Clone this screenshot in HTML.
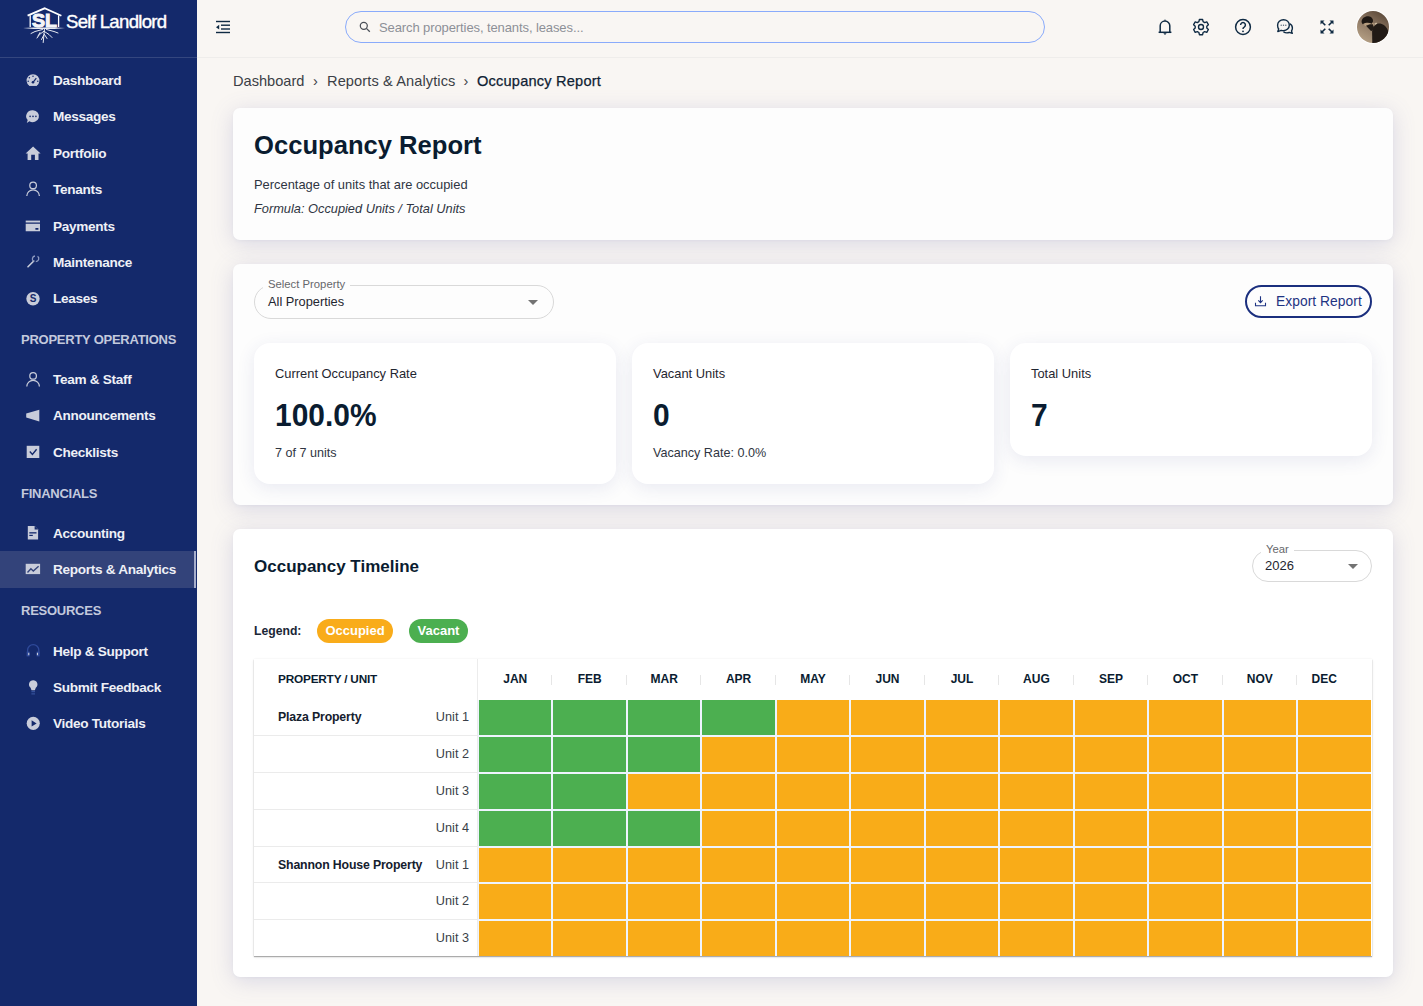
<!DOCTYPE html>
<html><head><meta charset="utf-8">
<style>
*{box-sizing:border-box;margin:0;padding:0}
html,body{width:1423px;height:1006px;overflow:hidden}
body{font-family:"Liberation Sans",sans-serif;background:#f9f6f3;color:#1f2937;position:relative}
.abs{position:absolute}
.sb{position:absolute;left:0;top:0;width:197px;height:1006px;background:#14296b}
.sb .div{position:absolute;left:0;top:57px;width:197px;height:1px;background:#34467f}
.sb .logo{position:absolute;left:20px;top:4px}
.sb .ltxt{position:absolute;left:66px;top:11.5px;color:#fff;font-size:18.6px;line-height:20px;letter-spacing:-0.7px;white-space:nowrap;-webkit-text-stroke:0.4px #fff}
.sb .ic{position:absolute;left:26px;width:14px;height:14px}
.sb .ic svg{display:block}
.sb .nt{position:absolute;left:53px;color:#eef0f6;font-size:13.6px;line-height:16px;font-weight:bold;white-space:nowrap;letter-spacing:-0.3px}
.sb .sec{position:absolute;left:21px;color:#c3c9dd;font-size:13px;line-height:15px;font-weight:bold;white-space:nowrap;letter-spacing:-0.25px}
.sb .act{position:absolute;left:0;width:196px;height:37px;background:#33437a}
.sb .act:after{content:"";position:absolute;left:194px;top:0;width:2px;height:37px;background:#a7aecb}
.top{position:absolute;left:197px;top:0;width:1226px;height:58px;background:#f9f6f3;border-bottom:1px solid #efedeb}
.search{position:absolute;left:345px;top:11px;width:700px;height:32px;border:1px solid #8aabfb;border-radius:16px}
.search .ph{position:absolute;left:33px;top:8px;font-size:13px;line-height:15px;color:#8d9097;letter-spacing:-0.1px;white-space:nowrap}
.tic{position:absolute}
.tic svg{display:block}
.card{position:absolute;left:233px;width:1160px;background:#fdfdfd;border-radius:7px;box-shadow:0 4px 22px rgba(100,105,170,0.21),0 1px 3px rgba(80,90,160,0.05)}
.t{position:absolute;white-space:nowrap}
.stat{position:absolute;background:#fff;border-radius:16px;box-shadow:0 4px 18px rgba(50,55,140,0.10)}
.sel{position:absolute;border:1px solid #d9d9d9;border-radius:17px}
.sel .lb{position:absolute;top:-9px;padding:0 5px;font-size:11.3px;line-height:14px;color:#66676b;background:#fdfdfd;white-space:nowrap}
.caret{position:absolute;width:0;height:0;border-left:5px solid transparent;border-right:5px solid transparent;border-top:5px solid #737373}
.chip{position:absolute;height:24px;border-radius:12px;color:#fff;font-size:13px;font-weight:bold;line-height:24px;text-align:center}
.tbl{position:absolute;background:#fff;box-shadow:0 1px 1px rgba(0,0,0,0.28),0 1px 3px rgba(0,0,0,0.10),0 0 1px rgba(0,0,0,0.06)}
.cell{position:absolute}
</style></head><body>

<div class="sb">
<div class="logo"><svg width="50" height="42" viewBox="0 0 50 42">
<defs><linearGradient id="gl" gradientUnits="userSpaceOnUse" x1="3" y1="0" x2="45" y2="0"><stop offset="0" stop-color="#fff" stop-opacity="0"/><stop offset="0.25" stop-color="#fff" stop-opacity="0.9"/><stop offset="0.75" stop-color="#fff" stop-opacity="0.9"/><stop offset="1" stop-color="#fff" stop-opacity="0"/></linearGradient></defs>
<g fill="none" stroke="#fff" stroke-linejoin="miter">
<path d="M7.6 11.6L24.6 4.3 41.4 11.8" stroke-width="1.8"/>
<path d="M10.2 11.2V23M38.6 11.2V23" stroke-width="1.3"/>
</g>
<text x="12" y="22.6" font-family="Liberation Sans" font-weight="bold" font-size="17.6" fill="#f4f5f8" stroke="#f4f5f8" stroke-width="1" textLength="25" lengthAdjust="spacingAndGlyphs">SL</text>
<path d="M3.5 24.3H45" stroke="url(#gl)" stroke-width="1.6"/>
<g stroke="#e6e9f2" stroke-width="1" fill="none" stroke-linecap="round">
<path d="M24.5 24.5L24 30 23.2 38.5M24.2 27L19.5 30.5 17 34M24.4 27.5L29 30.5 32 33.5M22.5 25.5L15 27.5 11 29.5M26.5 25.5L34 27.5 38 29M23.8 31L21.5 35.5M24.2 30L27 34.5M20 28.5L18 32"/>
</g>
</svg></div><div class="ltxt">Self Landlord</div><div class="div"></div>
<div class="nt" style="top:73.09px">Dashboard</div>
<div class="nt" style="top:109.49px">Messages</div>
<div class="nt" style="top:145.89px">Portfolio</div>
<div class="nt" style="top:182.29px">Tenants</div>
<div class="nt" style="top:218.69px">Payments</div>
<div class="nt" style="top:255.09px">Maintenance</div>
<div class="nt" style="top:291.49px">Leases</div>
<div class="sec" style="top:331.80px">PROPERTY OPERATIONS</div>
<div class="nt" style="top:372.09px">Team &amp; Staff</div>
<div class="nt" style="top:408.49px">Announcements</div>
<div class="nt" style="top:444.89px">Checklists</div>
<div class="sec" style="top:485.60px">FINANCIALS</div>
<div class="nt" style="top:526.09px">Accounting</div>
<div class="act" style="top:551px"></div>
<div class="nt" style="top:562.49px">Reports &amp; Analytics</div>
<div class="sec" style="top:603.00px">RESOURCES</div>
<div class="nt" style="top:643.59px">Help &amp; Support</div>
<div class="nt" style="top:680.09px">Submit Feedback</div>
<div class="nt" style="top:716.39px">Video Tutorials</div>
<svg class="abs" style="left:0;top:0" width="197" height="1006" viewBox="0 0 197 1006">
<g fill="#c8ccda">
<path d="M29.3 85.8A6.4 6.4 0 1 1 36.7 85.8Z"/><path d="M28.2 83.5H37.8L36.7 85.8H29.3Z"/>
<path d="M33 110.2a6.3 6 0 1 1 -3.6 11.1l-2.6 1.7.9-2.9A6.3 6 0 0 1 33 110.2z"/>
<path d="M33.1 146.6L25.6 153.6H27.6V160.1H31.2V154.8H34.9V160.1H38.5V153.6H40.6Z"/>
<rect x="25.7" y="220.6" width="14.3" height="1.9"/>
<path d="M25.7 223.8H40V231.3H25.7ZM35.4 228.1V229.7H38.4V228.1Z" fill-rule="evenodd"/>
<circle cx="33" cy="298.8" r="6.7"/>
<path d="M39.3 409.8V421.5L26.2 417.6V413.6Z"/>
<rect x="26.7" y="445.8" width="12.6" height="12.2"/>
<path d="M27.8 526H34.6L38.1 529.5V539.6H27.8Z"/>
<rect x="25.7" y="563.8" width="14.4" height="10.3"/>
<path d="M33.2 680.3a4.2 4.2 0 0 1 2.6 7.5l-.9 2.4h-3.4l-.9-2.4a4.2 4.2 0 0 1 2.6-7.5z"/>
<circle cx="33.25" cy="723.35" r="6.55"/>
</g>
<g fill="#14296b">
<circle cx="33" cy="76.3" r=".75"/><circle cx="29.4" cy="77.8" r=".75"/><circle cx="28.2" cy="81.3" r=".75"/><circle cx="37.8" cy="81.3" r=".75"/>
<circle cx="33" cy="82.3" r="1.3"/>
<circle cx="30.1" cy="116.4" r=".8"/><circle cx="33" cy="116.4" r=".8"/><circle cx="35.9" cy="116.4" r=".8"/>
<path d="M34.6 526V529.5H38.1Z"/>
<rect x="29.3" y="532.2" width="7.2" height="1.3"/><rect x="29.3" y="534.8" width="3.5" height="1.2"/>
<path d="M31.6 720.2V726.6L36.6 723.4Z"/>
</g>
<path d="M33 82.3L36.3 78.2" stroke="#14296b" stroke-width="1.2"/>
<g fill="none" stroke="#c8ccda" stroke-width="1.25">
<circle cx="33.1" cy="185.4" r="3.3"/><path d="M26.8 196.1A6.3 6.3 0 0 1 39.4 196.1"/>
<circle cx="33.1" cy="375.9" r="3.3"/><path d="M26.8 386.6A6.3 6.3 0 0 1 39.4 386.6"/>
</g>
<path d="M28 266.8L33.8 261" stroke="#c8ccda" stroke-width="1.6" stroke-linecap="round"/>
<path d="M33.6 261.4A3 3 0 0 1 35 256M37.6 256.2A3 3 0 0 1 35.8 261.6" fill="none" stroke="#8e9ac0" stroke-width="1.3"/>
<text x="33" y="302.3" text-anchor="middle" font-family="Liberation Sans" font-weight="bold" font-size="10" fill="#14296b">S</text>
<path d="M29.8 451.6L32.4 454.4 36.6 449.2" fill="none" stroke="#14296b" stroke-width="1.4"/>
<path d="M27.5 572.4L30.9 568.8 33.3 571 38.6 566.2" fill="none" stroke="#33437a" stroke-width="1.4"/>
<path d="M27.6 654V650.2A5.6 5.6 0 0 1 38.8 650.2V654" fill="none" stroke="#2f4a9a" stroke-width="1.3"/>
<rect x="26.6" y="651.6" width="3" height="4.8" fill="#2f4a9a"/><rect x="36.6" y="651.6" width="3" height="4.8" fill="#2f4a9a"/>
<rect x="28.2" y="652.8" width="1.1" height="2.4" fill="#c8ccda"/><rect x="36.9" y="652.8" width="1.1" height="2.4" fill="#c8ccda"/>
<rect x="31.4" y="691.2" width="3.6" height="1" fill="#3d5aa6"/><rect x="31.4" y="693.4" width="3.6" height="1" fill="#3d5aa6"/>
</svg>
</div>
<div class="top"></div>
<div class="tic" style="left:215px;top:20px"><svg width="16" height="14" viewBox="0 0 16 14" ><g fill="#0f2a43"><rect x="1" y="0.8" width="14" height="1.4"/><rect x="6" y="4.5" width="9" height="1.4"/><rect x="6" y="8.3" width="9" height="1.4"/><rect x="1" y="11.8" width="14" height="1.4"/><path d="M1 7.2L4.2 4.8v4.8z"/></g></svg></div>
<div class="search"><div class="ph">Search properties, tenants, leases...</div></div>
<div class="tic" style="left:359px;top:21px"><svg width="12" height="12" viewBox="0 0 12 12" ><g fill="none" stroke="#4a4f57" stroke-width="1.25"><circle cx="4.8" cy="4.8" r="3.5"/><path d="M7.4 7.4L10.8 10.8"/></g></svg></div>
<div class="tic" style="left:1157px;top:18px"><svg width="16" height="18" viewBox="0 0 16 18" ><g fill="none" stroke="#0f2a43" stroke-width="1.5" stroke-linejoin="round"><path d="M3.2 14V7.8a4.8 4.8 0 0 1 9.6 0V14"/><path d="M1.6 14.3h12.8"/></g><path fill="#0f2a43" d="M8 1.2l1 1.4H7zM6.3 15.2h3.4L8 17z"/></svg></div>
<div class="tic" style="left:1192px;top:18px"><svg width="18" height="18" viewBox="0 0 18 18" ><g fill="none" stroke="#0f2a43" stroke-width="1.35" stroke-linejoin="round"><path d="M7.4 1.5h3.2l.5 2.2 1.6.9 2.1-.7 1.6 2.8-1.6 1.5v1.8l1.6 1.5-1.6 2.8-2.1-.7-1.6.9-.5 2.2H7.4l-.5-2.2-1.6-.9-2.1.7-1.6-2.8 1.6-1.5V8.2L1.6 6.7l1.6-2.8 2.1.7 1.6-.9z"/><circle cx="9" cy="9" r="2.5"/></g></svg></div>
<div class="tic" style="left:1234px;top:18px"><svg width="18" height="18" viewBox="0 0 18 18" ><circle cx="9" cy="9" r="7.4" fill="none" stroke="#0f2a43" stroke-width="1.5"/><path d="M6.6 7a2.4 2.4 0 1 1 3.6 2.1c-.8.4-1.2.9-1.2 1.8" fill="none" stroke="#0f2a43" stroke-width="1.5"/><circle cx="9" cy="13.3" r="0.9" fill="#0f2a43"/></svg></div>
<div class="tic" style="left:1276px;top:18px"><svg width="18" height="17" viewBox="0 0 18 17" ><g fill="none" stroke="#0f2a43" stroke-width="1.4" stroke-linejoin="round"><path d="M7.5 1.8c3.3 0 5.8 2.3 5.8 5.4s-2.5 5.5-5.8 5.5c-.9 0-1.7-.2-2.4-.4L1.8 13.6l.9-2.6C1.9 10 1.6 8.7 1.6 7.2c0-3.1 2.6-5.4 5.9-5.4z"/><path d="M13.6 5.6c1.7.9 2.8 2.6 2.8 4.5 0 1.1-.3 2.1-.9 2.9l.8 2.4-3-1c-.7.3-1.5.5-2.4.5-1.3 0-2.5-.4-3.4-1"/></g><g fill="#0f2a43" opacity=".7"><circle cx="5.2" cy="7.2" r=".7"/><circle cx="7.5" cy="7.2" r=".7"/><circle cx="9.8" cy="7.2" r=".7"/></g></svg></div>
<div class="tic" style="left:1319px;top:19px"><svg width="16" height="16" viewBox="0 0 16 16" ><g fill="none" stroke="#0f2a43" stroke-width="1.6"><path d="M3 3l3.3 3.3M13 3l-3.3 3.3M3 13l3.3-3.3M13 13l-3.3-3.3"/></g><g fill="#0f2a43"><path d="M1.5 1.5h4L1.5 5.5z"/><path d="M14.5 1.5h-4l4 4z"/><path d="M1.5 14.5h4l-4-4z"/><path d="M14.5 14.5h-4l4-4z"/></g></svg></div>
<div class="tic" style="left:1355px;top:9px">
<svg width="36" height="36" viewBox="0 0 36 36">
<defs><linearGradient id="ag" x1="0.75" y1="0" x2="0.2" y2="0.95"><stop offset="0" stop-color="#5a4838"/><stop offset="0.45" stop-color="#8a7460"/><stop offset="1" stop-color="#b5a085"/></linearGradient>
<clipPath id="ac"><circle cx="18" cy="18" r="16"/></clipPath></defs>
<circle cx="18" cy="18" r="17" fill="#fff" opacity="0.9"/>
<circle cx="18" cy="18" r="16" fill="url(#ag)"/>
<g clip-path="url(#ac)">
<path fill="#b59c7e" d="M8.5 13.5L15 12.5 18.5 14 19 17 14 18.5 9.5 16.5z"/>
<path fill="#c9b79d" d="M19.6 14l2.4-.2.2 3-2.3.5z"/>
<path fill="#211a15" d="M17.3 36L17.1 22.5C17.6 18.5 20.5 15 23.5 14.6 27.5 14.4 31 17 33 21.5L37 36Z"/>
<path fill="#1d1713" d="M6.6 13.2C6.4 9.3 9.8 7 13.4 7.2 16.4 7.5 18.4 9.6 18 12.5L16.8 14.8C14.5 13.4 11 13.2 7.6 15.2Z"/>
<path fill="#231c17" d="M11 16.8C13 15.6 15.3 15 17.8 15.3L19 18.6C18.5 20.8 17.2 22 16 22 14.5 20.3 12.8 18.6 11 16.8Z"/>
</g>
</svg></div>
<div class="t" style="left:233px;top:73.14px;font-size:14.6px;line-height:17px;color:#3b3f46">Dashboard</div>
<div class="t" style="left:313px;top:73.14px;font-size:14.6px;line-height:17px;color:#3b3f46">&#8250;</div>
<div class="t" style="left:327px;top:73.14px;font-size:14.6px;line-height:17px;color:#3b3f46;letter-spacing:0.1px">Reports &amp; Analytics</div>
<div class="t" style="left:463.5px;top:73.14px;font-size:14.6px;line-height:17px;color:#3b3f46">&#8250;</div>
<div class="t" style="left:477px;top:73.14px;font-size:14.6px;line-height:17px;color:#0f2233;-webkit-text-stroke:0.25px #0f2233;letter-spacing:0.2px">Occupancy Report</div>
<div class="card" style="top:108px;height:132px">
<div class="t" style="left:21px;top:22.43px;font-size:25.6px;line-height:30px;font-weight:bold;color:#0a1c30">Occupancy Report</div>
<div class="t" style="left:21px;top:69.03px;font-size:12.9px;line-height:15px;color:#2f3542">Percentage of units that are occupied</div>
<div class="t" style="left:21px;top:93.06px;font-size:12.8px;line-height:15px;color:#2f3542;font-style:italic">Formula: Occupied Units / Total Units</div>
</div>
<div class="card" style="top:264px;height:241px">
<div class="sel" style="left:21px;top:21px;width:300px;height:34px">
<div class="lb" style="left:8px">Select Property</div>
<div class="t" style="left:13px;top:8.06px;font-size:12.8px;line-height:15px;color:#1f2630">All Properties</div>
<div class="caret" style="left:273px;top:14px"></div>
</div>
<div class="abs" style="left:1012px;top:21px;width:127px;height:33px;border:2px solid #1b2f7e;border-radius:17px"></div>
<div class="tic" style="left:1021px;top:31px"><svg width="13" height="12" viewBox="0 0 13 12" ><g fill="none" stroke="#1e3382" stroke-width="1.1"><path d="M6.5 1.2v6.3M4.3 5.4l2.2 2.2 2.2-2.2M1.5 7.8v2.9h10V7.8"/></g></svg></div>
<div class="t" style="left:1043px;top:30.12px;font-size:13.8px;line-height:16px;color:#1e3382;letter-spacing:0.05px">Export Report</div>
<div class="stat" style="left:21px;top:79px;width:362px;height:141px">
<div class="t" style="left:21px;top:23.13px;font-size:12.9px;line-height:15px;color:#1f2630">Current Occupancy Rate</div>
<div class="t" style="left:21px;top:54.09px;font-size:31.5px;line-height:36px;font-weight:bold;color:#0a1c30;transform:scaleX(0.95);transform-origin:0 0">100.0%</div>
<div class="t" style="left:21px;top:102.63px;font-size:12.6px;line-height:15px;color:#2f3542">7 of 7 units</div>
</div>
<div class="stat" style="left:399px;top:79px;width:362px;height:141px">
<div class="t" style="left:21px;top:23.13px;font-size:12.9px;line-height:15px;color:#1f2630">Vacant Units</div>
<div class="t" style="left:21px;top:54.09px;font-size:31.5px;line-height:36px;font-weight:bold;color:#0a1c30;transform:scaleX(0.95);transform-origin:0 0">0</div>
<div class="t" style="left:21px;top:102.63px;font-size:12.6px;line-height:15px;color:#2f3542">Vacancy Rate: 0.0%</div>
</div>
<div class="stat" style="left:777px;top:79px;width:362px;height:113px">
<div class="t" style="left:21px;top:23.13px;font-size:12.9px;line-height:15px;color:#1f2630">Total Units</div>
<div class="t" style="left:21px;top:54.09px;font-size:31.5px;line-height:36px;font-weight:bold;color:#0a1c30;transform:scaleX(0.95);transform-origin:0 0">7</div>
</div>
</div>
<div class="card" style="top:529px;height:448px;background:#fff">
<div class="t" style="left:21px;top:27.61px;font-size:17px;line-height:20px;font-weight:bold;color:#0a1c30">Occupancy Timeline</div>
<div class="sel" style="left:1019px;top:21px;width:120px;height:32px;border-radius:16px">
<div class="lb" style="left:8px;background:#fff">Year</div>
<div class="t" style="left:12px;top:7.00px;font-size:13px;line-height:15px;color:#1f2630">2026</div>
<div class="caret" style="left:95px;top:13px"></div>
</div>
<div class="t" style="left:21px;top:95.27px;font-size:12.2px;line-height:15px;font-weight:bold;color:#1a2636">Legend:</div>
<div class="chip" style="left:84px;top:90px;width:76px;background:#f9ac1a">Occupied</div>
<div class="chip" style="left:176px;top:90px;width:59px;background:#4caf50">Vacant</div>
<div class="tbl" style="left:21px;top:130px;width:1118px;height:297px">
<div class="t" style="left:24px;top:13.31px;font-size:11.8px;line-height:14px;font-weight:bold;color:#0a1c30;letter-spacing:-0.2px">PROPERTY / UNIT</div>
<div class="abs" style="left:223px;top:0;width:1px;height:297px;background:#ececec"></div>
<div class="t" style="left:231.23px;width:60px;text-align:center;top:13.24px;font-size:12px;line-height:14px;font-weight:bold;color:#0a1c30">JAN</div>
<div class="t" style="left:305.69px;width:60px;text-align:center;top:13.24px;font-size:12px;line-height:14px;font-weight:bold;color:#0a1c30">FEB</div>
<div class="abs" style="left:297.00px;top:16px;width:1px;height:10px;background:#e6e6e6"></div>
<div class="t" style="left:380.15px;width:60px;text-align:center;top:13.24px;font-size:12px;line-height:14px;font-weight:bold;color:#0a1c30">MAR</div>
<div class="abs" style="left:372.00px;top:16px;width:1px;height:10px;background:#e6e6e6"></div>
<div class="t" style="left:454.60px;width:60px;text-align:center;top:13.24px;font-size:12px;line-height:14px;font-weight:bold;color:#0a1c30">APR</div>
<div class="abs" style="left:446.00px;top:16px;width:1px;height:10px;background:#e6e6e6"></div>
<div class="t" style="left:529.06px;width:60px;text-align:center;top:13.24px;font-size:12px;line-height:14px;font-weight:bold;color:#0a1c30">MAY</div>
<div class="abs" style="left:521.00px;top:16px;width:1px;height:10px;background:#e6e6e6"></div>
<div class="t" style="left:603.52px;width:60px;text-align:center;top:13.24px;font-size:12px;line-height:14px;font-weight:bold;color:#0a1c30">JUN</div>
<div class="abs" style="left:595.00px;top:16px;width:1px;height:10px;background:#e6e6e6"></div>
<div class="t" style="left:677.98px;width:60px;text-align:center;top:13.24px;font-size:12px;line-height:14px;font-weight:bold;color:#0a1c30">JUL</div>
<div class="abs" style="left:670.00px;top:16px;width:1px;height:10px;background:#e6e6e6"></div>
<div class="t" style="left:752.44px;width:60px;text-align:center;top:13.24px;font-size:12px;line-height:14px;font-weight:bold;color:#0a1c30">AUG</div>
<div class="abs" style="left:744.00px;top:16px;width:1px;height:10px;background:#e6e6e6"></div>
<div class="t" style="left:826.90px;width:60px;text-align:center;top:13.24px;font-size:12px;line-height:14px;font-weight:bold;color:#0a1c30">SEP</div>
<div class="abs" style="left:819.00px;top:16px;width:1px;height:10px;background:#e6e6e6"></div>
<div class="t" style="left:901.35px;width:60px;text-align:center;top:13.24px;font-size:12px;line-height:14px;font-weight:bold;color:#0a1c30">OCT</div>
<div class="abs" style="left:893.00px;top:16px;width:1px;height:10px;background:#e6e6e6"></div>
<div class="t" style="left:975.81px;width:60px;text-align:center;top:13.24px;font-size:12px;line-height:14px;font-weight:bold;color:#0a1c30">NOV</div>
<div class="abs" style="left:968.00px;top:16px;width:1px;height:10px;background:#e6e6e6"></div>
<div class="t" style="left:1040.27px;width:60px;text-align:center;top:13.24px;font-size:12px;line-height:14px;font-weight:bold;color:#0a1c30">DEC</div>
<div class="abs" style="left:1042.00px;top:16px;width:1px;height:10px;background:#e6e6e6"></div>
<div class="abs" style="left:224px;top:41px;width:893px;height:256px;background:#eef4fe"></div>
<div class="t" style="left:24px;top:51.44px;font-size:12.3px;line-height:15px;font-weight:bold;color:#14202e;letter-spacing:-0.15px">Plaza Property</div>
<div class="t" style="left:135px;width:80px;text-align:right;top:51.30px;font-size:12.7px;line-height:15px;color:#3a3f48">Unit 1</div>
<div class="cell" style="left:225px;top:41px;width:72px;height:35px;background:#4caf50"></div>
<div class="cell" style="left:299px;top:41px;width:73px;height:35px;background:#4caf50"></div>
<div class="cell" style="left:374px;top:41px;width:72px;height:35px;background:#4caf50"></div>
<div class="cell" style="left:448px;top:41px;width:73px;height:35px;background:#4caf50"></div>
<div class="cell" style="left:523px;top:41px;width:72px;height:35px;background:#f9ac18"></div>
<div class="cell" style="left:597px;top:41px;width:73px;height:35px;background:#f9ac18"></div>
<div class="cell" style="left:672px;top:41px;width:72px;height:35px;background:#f9ac18"></div>
<div class="cell" style="left:746px;top:41px;width:73px;height:35px;background:#f9ac18"></div>
<div class="cell" style="left:821px;top:41px;width:72px;height:35px;background:#f9ac18"></div>
<div class="cell" style="left:895px;top:41px;width:73px;height:35px;background:#f9ac18"></div>
<div class="cell" style="left:970px;top:41px;width:72px;height:35px;background:#f9ac18"></div>
<div class="cell" style="left:1044px;top:41px;width:73px;height:35px;background:#f9ac18"></div>
<div class="abs" style="left:0;top:76px;width:223px;height:1px;background:#ebebeb"></div>
<div class="t" style="left:135px;width:80px;text-align:right;top:88.30px;font-size:12.7px;line-height:15px;color:#3a3f48">Unit 2</div>
<div class="cell" style="left:225px;top:78px;width:72px;height:35px;background:#4caf50"></div>
<div class="cell" style="left:299px;top:78px;width:73px;height:35px;background:#4caf50"></div>
<div class="cell" style="left:374px;top:78px;width:72px;height:35px;background:#4caf50"></div>
<div class="cell" style="left:448px;top:78px;width:73px;height:35px;background:#f9ac18"></div>
<div class="cell" style="left:523px;top:78px;width:72px;height:35px;background:#f9ac18"></div>
<div class="cell" style="left:597px;top:78px;width:73px;height:35px;background:#f9ac18"></div>
<div class="cell" style="left:672px;top:78px;width:72px;height:35px;background:#f9ac18"></div>
<div class="cell" style="left:746px;top:78px;width:73px;height:35px;background:#f9ac18"></div>
<div class="cell" style="left:821px;top:78px;width:72px;height:35px;background:#f9ac18"></div>
<div class="cell" style="left:895px;top:78px;width:73px;height:35px;background:#f9ac18"></div>
<div class="cell" style="left:970px;top:78px;width:72px;height:35px;background:#f9ac18"></div>
<div class="cell" style="left:1044px;top:78px;width:73px;height:35px;background:#f9ac18"></div>
<div class="abs" style="left:0;top:113px;width:223px;height:1px;background:#ebebeb"></div>
<div class="t" style="left:135px;width:80px;text-align:right;top:125.30px;font-size:12.7px;line-height:15px;color:#3a3f48">Unit 3</div>
<div class="cell" style="left:225px;top:115px;width:72px;height:35px;background:#4caf50"></div>
<div class="cell" style="left:299px;top:115px;width:73px;height:35px;background:#4caf50"></div>
<div class="cell" style="left:374px;top:115px;width:72px;height:35px;background:#f9ac18"></div>
<div class="cell" style="left:448px;top:115px;width:73px;height:35px;background:#f9ac18"></div>
<div class="cell" style="left:523px;top:115px;width:72px;height:35px;background:#f9ac18"></div>
<div class="cell" style="left:597px;top:115px;width:73px;height:35px;background:#f9ac18"></div>
<div class="cell" style="left:672px;top:115px;width:72px;height:35px;background:#f9ac18"></div>
<div class="cell" style="left:746px;top:115px;width:73px;height:35px;background:#f9ac18"></div>
<div class="cell" style="left:821px;top:115px;width:72px;height:35px;background:#f9ac18"></div>
<div class="cell" style="left:895px;top:115px;width:73px;height:35px;background:#f9ac18"></div>
<div class="cell" style="left:970px;top:115px;width:72px;height:35px;background:#f9ac18"></div>
<div class="cell" style="left:1044px;top:115px;width:73px;height:35px;background:#f9ac18"></div>
<div class="abs" style="left:0;top:150px;width:223px;height:1px;background:#ebebeb"></div>
<div class="t" style="left:135px;width:80px;text-align:right;top:162.30px;font-size:12.7px;line-height:15px;color:#3a3f48">Unit 4</div>
<div class="cell" style="left:225px;top:152px;width:72px;height:35px;background:#4caf50"></div>
<div class="cell" style="left:299px;top:152px;width:73px;height:35px;background:#4caf50"></div>
<div class="cell" style="left:374px;top:152px;width:72px;height:35px;background:#4caf50"></div>
<div class="cell" style="left:448px;top:152px;width:73px;height:35px;background:#f9ac18"></div>
<div class="cell" style="left:523px;top:152px;width:72px;height:35px;background:#f9ac18"></div>
<div class="cell" style="left:597px;top:152px;width:73px;height:35px;background:#f9ac18"></div>
<div class="cell" style="left:672px;top:152px;width:72px;height:35px;background:#f9ac18"></div>
<div class="cell" style="left:746px;top:152px;width:73px;height:35px;background:#f9ac18"></div>
<div class="cell" style="left:821px;top:152px;width:72px;height:35px;background:#f9ac18"></div>
<div class="cell" style="left:895px;top:152px;width:73px;height:35px;background:#f9ac18"></div>
<div class="cell" style="left:970px;top:152px;width:72px;height:35px;background:#f9ac18"></div>
<div class="cell" style="left:1044px;top:152px;width:73px;height:35px;background:#f9ac18"></div>
<div class="abs" style="left:0;top:187px;width:223px;height:1px;background:#ebebeb"></div>
<div class="t" style="left:24px;top:198.94px;font-size:12.3px;line-height:15px;font-weight:bold;color:#14202e;letter-spacing:-0.15px">Shannon House Property</div>
<div class="t" style="left:135px;width:80px;text-align:right;top:198.80px;font-size:12.7px;line-height:15px;color:#3a3f48">Unit 1</div>
<div class="cell" style="left:225px;top:189px;width:72px;height:34px;background:#f9ac18"></div>
<div class="cell" style="left:299px;top:189px;width:73px;height:34px;background:#f9ac18"></div>
<div class="cell" style="left:374px;top:189px;width:72px;height:34px;background:#f9ac18"></div>
<div class="cell" style="left:448px;top:189px;width:73px;height:34px;background:#f9ac18"></div>
<div class="cell" style="left:523px;top:189px;width:72px;height:34px;background:#f9ac18"></div>
<div class="cell" style="left:597px;top:189px;width:73px;height:34px;background:#f9ac18"></div>
<div class="cell" style="left:672px;top:189px;width:72px;height:34px;background:#f9ac18"></div>
<div class="cell" style="left:746px;top:189px;width:73px;height:34px;background:#f9ac18"></div>
<div class="cell" style="left:821px;top:189px;width:72px;height:34px;background:#f9ac18"></div>
<div class="cell" style="left:895px;top:189px;width:73px;height:34px;background:#f9ac18"></div>
<div class="cell" style="left:970px;top:189px;width:72px;height:34px;background:#f9ac18"></div>
<div class="cell" style="left:1044px;top:189px;width:73px;height:34px;background:#f9ac18"></div>
<div class="abs" style="left:0;top:223px;width:223px;height:1px;background:#ebebeb"></div>
<div class="t" style="left:135px;width:80px;text-align:right;top:235.30px;font-size:12.7px;line-height:15px;color:#3a3f48">Unit 2</div>
<div class="cell" style="left:225px;top:225px;width:72px;height:35px;background:#f9ac18"></div>
<div class="cell" style="left:299px;top:225px;width:73px;height:35px;background:#f9ac18"></div>
<div class="cell" style="left:374px;top:225px;width:72px;height:35px;background:#f9ac18"></div>
<div class="cell" style="left:448px;top:225px;width:73px;height:35px;background:#f9ac18"></div>
<div class="cell" style="left:523px;top:225px;width:72px;height:35px;background:#f9ac18"></div>
<div class="cell" style="left:597px;top:225px;width:73px;height:35px;background:#f9ac18"></div>
<div class="cell" style="left:672px;top:225px;width:72px;height:35px;background:#f9ac18"></div>
<div class="cell" style="left:746px;top:225px;width:73px;height:35px;background:#f9ac18"></div>
<div class="cell" style="left:821px;top:225px;width:72px;height:35px;background:#f9ac18"></div>
<div class="cell" style="left:895px;top:225px;width:73px;height:35px;background:#f9ac18"></div>
<div class="cell" style="left:970px;top:225px;width:72px;height:35px;background:#f9ac18"></div>
<div class="cell" style="left:1044px;top:225px;width:73px;height:35px;background:#f9ac18"></div>
<div class="abs" style="left:0;top:260px;width:223px;height:1px;background:#ebebeb"></div>
<div class="t" style="left:135px;width:80px;text-align:right;top:272.30px;font-size:12.7px;line-height:15px;color:#3a3f48">Unit 3</div>
<div class="cell" style="left:225px;top:262px;width:72px;height:35px;background:#f9ac18"></div>
<div class="cell" style="left:299px;top:262px;width:73px;height:35px;background:#f9ac18"></div>
<div class="cell" style="left:374px;top:262px;width:72px;height:35px;background:#f9ac18"></div>
<div class="cell" style="left:448px;top:262px;width:73px;height:35px;background:#f9ac18"></div>
<div class="cell" style="left:523px;top:262px;width:72px;height:35px;background:#f9ac18"></div>
<div class="cell" style="left:597px;top:262px;width:73px;height:35px;background:#f9ac18"></div>
<div class="cell" style="left:672px;top:262px;width:72px;height:35px;background:#f9ac18"></div>
<div class="cell" style="left:746px;top:262px;width:73px;height:35px;background:#f9ac18"></div>
<div class="cell" style="left:821px;top:262px;width:72px;height:35px;background:#f9ac18"></div>
<div class="cell" style="left:895px;top:262px;width:73px;height:35px;background:#f9ac18"></div>
<div class="cell" style="left:970px;top:262px;width:72px;height:35px;background:#f9ac18"></div>
<div class="cell" style="left:1044px;top:262px;width:73px;height:35px;background:#f9ac18"></div>
</div>
</div>
</body></html>
